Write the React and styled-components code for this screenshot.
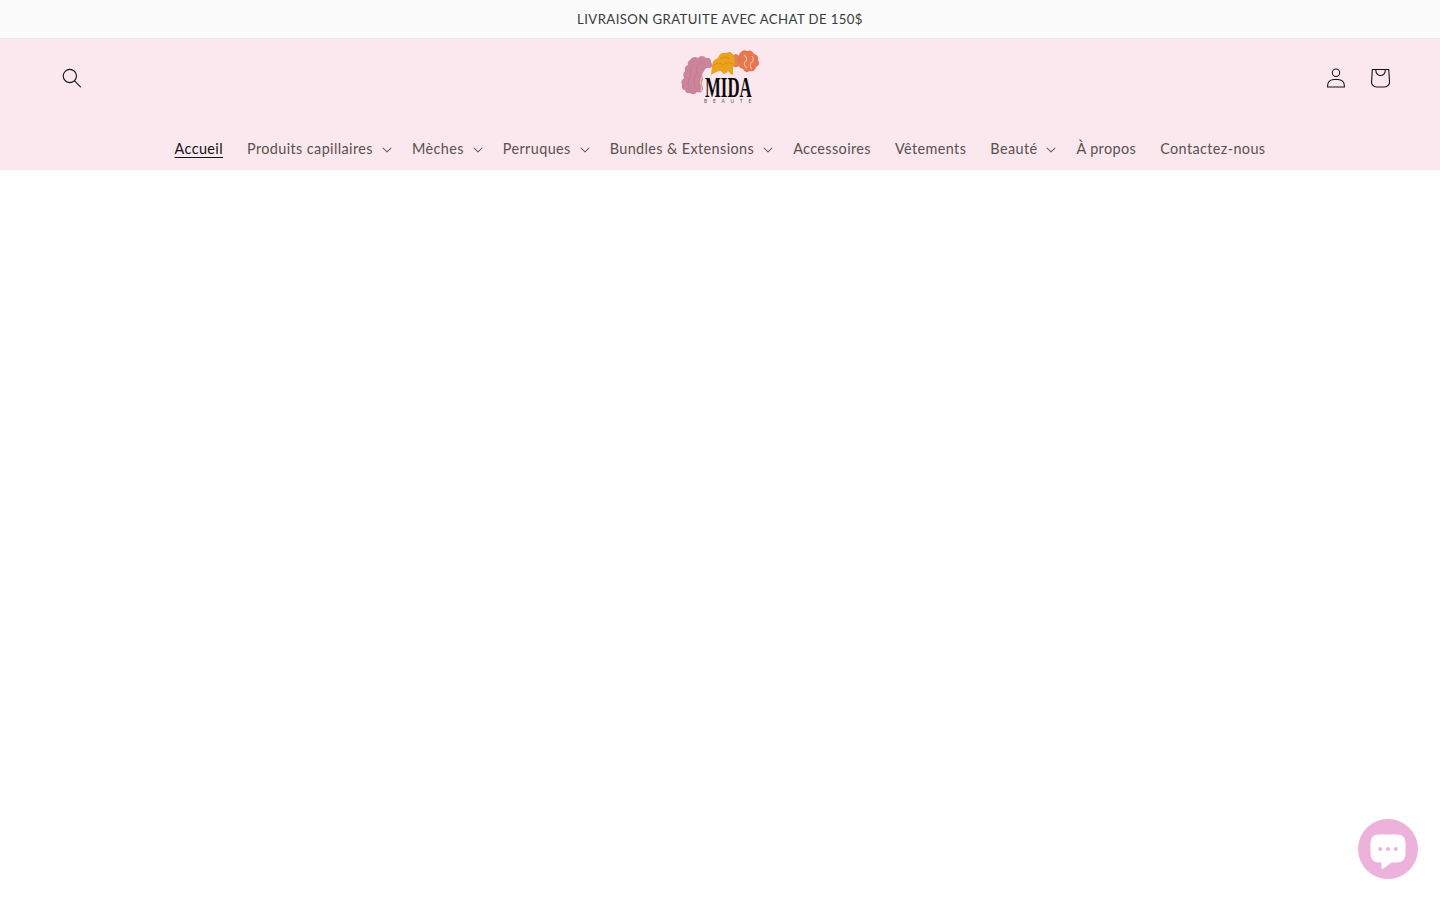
import React from 'react'
import styled, { createGlobalStyle } from 'styled-components'

const GlobalStyle = createGlobalStyle`
  * {
    box-sizing: border-box;
  }
  body {
    margin: 0;
    background: #fff;
    font-family: Lato, sans-serif;
    color: #121212;
  }
`

const Announcement = styled.div`
  display: flex;
  align-items: center;
  justify-content: center;
  height: 39px;
  background: #fbfbfb;
  border-bottom: 1px solid #eae8e9;
`

const AnnouncementText = styled.p`
  margin: 0;
  font-size: 13.2px;
  line-height: 22px;
  letter-spacing: 0.4px;
  color: #3a3a3a;
`

const Header = styled.header`
  height: 131px;
  background: #fbe8ee;
`

const TopRow = styled.div`
  display: grid;
  grid-template-columns: 1fr 90px 1fr;
  align-items: center;
  height: 78px;
  padding: 0 38px 0 50px;
`

const IconGroup = styled.div`
  display: flex;
  justify-content: ${({ $end }) => ($end ? 'flex-end' : 'flex-start')};
`

const IconButton = styled.button`
  display: flex;
  align-items: center;
  justify-content: center;
  width: 44px;
  height: 44px;
  padding: 0;
  border: 0;
  background: transparent;
  color: #121212;
`

const LogoLink = styled.a`
  display: block;
  width: 90px;
  height: 64px;
  margin-left: -6px;
`

const Nav = styled.nav`
  display: flex;
  justify-content: center;
  padding-top: 10px;
`

const NavItem = styled.a`
  display: flex;
  align-items: center;
  height: 44px;
  padding: 0 ${({ $menu }) => ($menu ? '8px' : '12px')} 0 12px;
  font-size: 14.4px;
  line-height: 18px;
  letter-spacing: 0.4px;
  white-space: nowrap;
  color: ${({ $active }) => ($active ? '#121212' : '#59514f')};

  span {
    text-decoration: ${({ $active }) => ($active ? 'underline' : 'none')};
    text-decoration-thickness: 1px;
    text-underline-offset: 3px;
  }

  svg {
    margin: 1px 0 0 9px;
  }
`

const ChatButton = styled.button`
  position: fixed;
  right: 22px;
  bottom: 21px;
  width: 60px;
  height: 60px;
  padding: 0;
  border: 0;
  border-radius: 50%;
  background: #edb2dc;
`

const links = [
  { label: 'Accueil', active: true },
  { label: 'Produits capillaires', menu: true },
  { label: 'Mèches', menu: true },
  { label: 'Perruques', menu: true },
  { label: 'Bundles & Extensions', menu: true },
  { label: 'Accessoires' },
  { label: 'Vêtements' },
  { label: 'Beauté', menu: true },
  { label: 'À propos' },
  { label: 'Contactez-nous' },
]

const SearchIcon = () => (
  <svg width="20" height="20" viewBox="0 0 18 19" fill="none">
    <path
      fillRule="evenodd"
      clipRule="evenodd"
      fill="currentColor"
      d="M11.03 11.68A5.784 5.784 0 112.85 3.5a5.784 5.784 0 018.18 8.18zm.26 1.12a6.78 6.78 0 11.72-.7l5.4 5.4a.5.5 0 11-.71.7l-5.41-5.4z"
    />
  </svg>
)

const AccountIcon = () => (
  <svg width="20" height="20" viewBox="0 0 18 19" fill="none">
    <path
      fillRule="evenodd"
      clipRule="evenodd"
      fill="currentColor"
      d="M6 4.5a3 3 0 116 0 3 3 0 01-6 0zm3-4a4 4 0 100 8 4 4 0 000-8zm5.58 12.15c1.12.82 1.83 2.24 1.91 4.85H1.51c.08-2.6.79-4.03 1.9-4.85C4.66 11.75 6.5 11.5 9 11.5s4.35.26 5.58 1.15zM9 10.5c-2.5 0-4.65.24-6.17 1.35C1.27 12.98.5 14.93.5 18v.5h17V18c0-3.07-.77-5.02-2.33-6.15-1.52-1.1-3.67-1.35-6.17-1.35z"
    />
  </svg>
)

const CartIcon = () => (
  <svg width="44" height="44" viewBox="0 0 40 40" fill="none">
    <path
      fillRule="evenodd"
      fill="currentColor"
      d="M15.75 11.8h-3.16l-.77 11.6a5 5 0 0 0 4.99 5.34h7.38a5 5 0 0 0 4.99-5.33L28.4 11.8zm0 1h-2.22l-.71 10.67a4 4 0 0 0 3.99 4.27h7.38a4 4 0 0 0 4-4.27l-.72-10.67h-2.22v.63a4.75 4.75 0 1 1-9.5 0zm8.5 0h-7.5v.63a3.75 3.75 0 1 0 7.5 0z"
    />
  </svg>
)

const Caret = () => (
  <svg width="10" height="6" viewBox="0 0 10 6">
    <path
      fillRule="evenodd"
      fill="currentColor"
      d="M9.354.646a.5.5 0 00-.708 0L5 4.293 1.354.646a.5.5 0 00-.708.708l4 4a.5.5 0 00.708 0l4-4a.5.5 0 000-.708z"
    />
  </svg>
)

const Logo = () => (
  <svg width="90" height="64" viewBox="675 46 90 64">
    <path
      fill="#cb8499"
      d="M690 60Q693 55 698 58Q702 54 706 58Q711 57 711 62Q714 66 710 68Q706 67 704 71Q701 74 703 79Q701 83 703 88Q702 94 697 92Q694 96 690 93Q686 94 685 90Q681 90 682 85Q680 81 684 78Q682 74 685 71Q684 66 688 65Q687 62 690 60Z"
    />
    <path fill="none" stroke="#bf7790" strokeWidth="0.7" d="M694 64Q688 70 691 76Q686 82 690 89M702 61Q695 66 697 73Q692 79 695 87" />
    <path fill="none" stroke="#f3c0a8" strokeWidth="1.2" d="M702 77Q699 82 702 86L701 91" />
    <path fill="#df8254" d="M732 56Q736 52 739 56Q741 61 739 66Q735 69 732 65Z" />
    <path
      fill="#eba21f"
      d="M712 66Q712 60 718 58Q720 52 726 53Q732 50 734 57Q736 62 733 67L733 75Q730 74 728 71Q724 77 721 71Q717 71 711 75Z"
    />
    <path fill="none" stroke="#d98717" strokeWidth="0.9" d="M713 66Q719 61 723 65Q728 61 733 64M720 59Q725 55 729 59" />
    <path
      fill="#e77550"
      d="M740 53Q743 49 747 51Q752 49 754 54Q759 55 758 60Q761 65 756 67Q755 72 750 71Q745 74 743 69Q738 68 739 64Q736 60 738 57Z"
    />
    <path fill="none" stroke="#f8bd94" strokeWidth="1.1" d="M744 55Q749 59 745 62Q743 65 747 68M752 56Q755 60 751 63Q749 66 752 69" />
    <g transform="translate(705 97) scale(0.56 1)">
      <text fontFamily="Liberation Serif, serif" fontWeight="700" fontSize="30" fill="#0d0b0c">
        MIDA
      </text>
    </g>
    <text x="704" y="102.6" letterSpacing="5.8" fontFamily="Lato, sans-serif" fontSize="4.8" fill="#5b5054">
      BEAUTE
    </text>
  </svg>
)

const ChatIcon = () => (
  <svg width="60" height="60" viewBox="0 0 60 60">
    <path
      fill="#fff"
      d="M21 15.5H39Q47.500 15.500 47.500 24V34.500Q47.500 43.500 39 43.500H33.500L25.500 49.500Q23.500 50.500 23.500 48.500V43.500H21Q12.500 43.500 12.500 34.500V24Q12.500 15.500 21 15.500Z"
    />
    <circle cx="22.300" cy="30" r="2" fill="#edb2dc" />
    <circle cx="30" cy="30" r="2" fill="#edb2dc" />
    <circle cx="37.700" cy="30" r="2" fill="#edb2dc" />
  </svg>
)

const App = () => {
  return (
    <>
      <GlobalStyle />
      <Announcement>
        <AnnouncementText>LIVRAISON GRATUITE AVEC ACHAT DE 150$</AnnouncementText>
      </Announcement>
      <Header>
        <TopRow>
          <IconGroup>
            <IconButton>
              <SearchIcon />
            </IconButton>
          </IconGroup>
          <LogoLink>
            <Logo />
          </LogoLink>
          <IconGroup $end>
            <IconButton>
              <AccountIcon />
            </IconButton>
            <IconButton>
              <CartIcon />
            </IconButton>
          </IconGroup>
        </TopRow>
        <Nav>
          {links.map((link) => (
            <NavItem key={link.label} $active={link.active} $menu={link.menu}>
              <span>{link.label}</span>
              {link.menu && <Caret />}
            </NavItem>
          ))}
        </Nav>
      </Header>
      <ChatButton>
        <ChatIcon />
      </ChatButton>
    </>
  )
}

export default App
